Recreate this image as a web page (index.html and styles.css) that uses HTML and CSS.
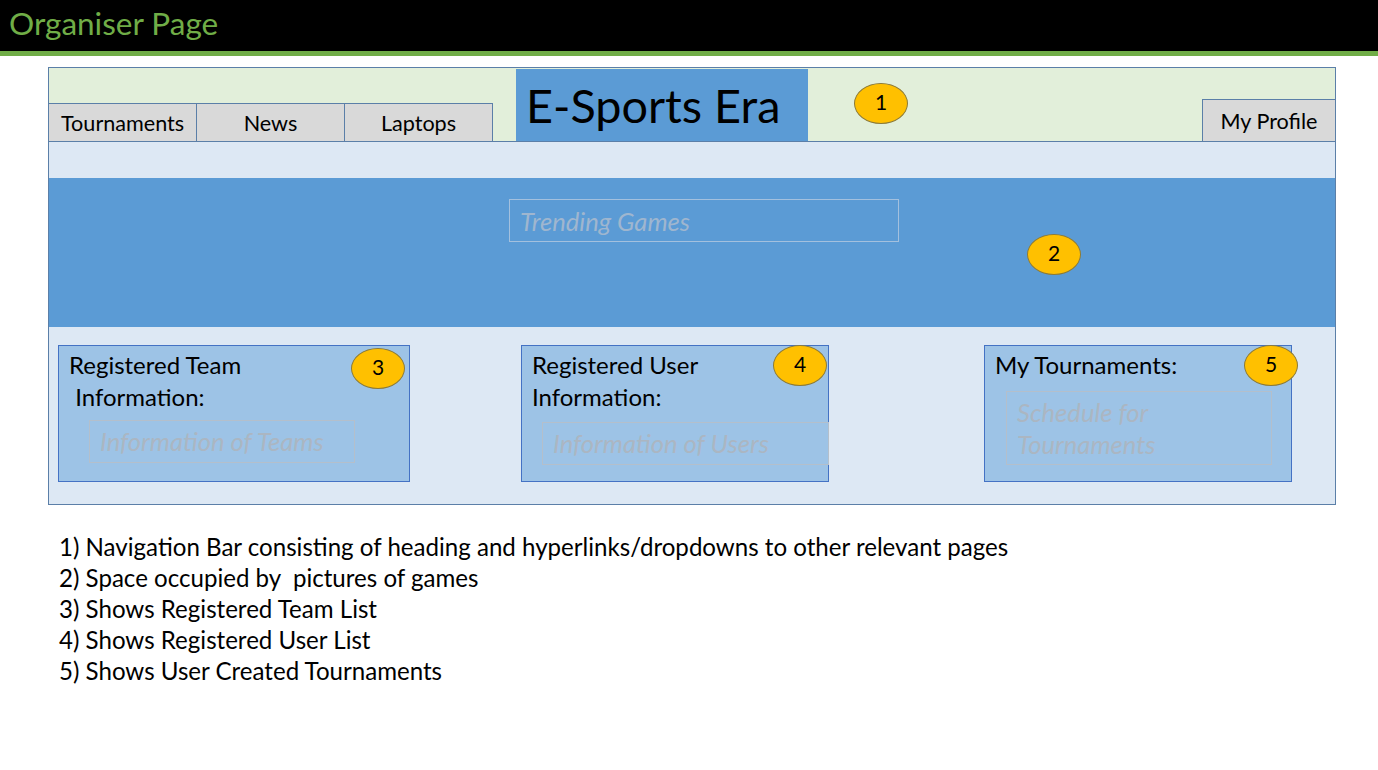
FILE: index.html
```html
<!DOCTYPE html>
<html>
<head>
<meta charset="utf-8">
<title>Organiser Page</title>
<link rel="stylesheet" href="styles.css">
</head>
<body>
<header class="topbar">
  <h1 class="page-title">Organiser Page</h1>
</header>

<section class="frame">
  <nav class="nav">
    <div class="tab tab-first">Tournaments</div>
    <div class="tab">News</div>
    <div class="tab">Laptops</div>
    <div class="brand">E-Sports Era</div>
    <div class="badge badge-nav">1</div>
    <div class="profile">My Profile</div>
  </nav>
  <div class="strip"></div>
  <div class="banner">
    <div class="trending">Trending Games</div>
    <div class="badge badge-banner">2</div>
  </div>
  <div class="cards">
    <div class="card card-team">
      <div class="card-title">Registered Team<br>&nbsp;Information:</div>
      <div class="inner inner-team">Information of Teams</div>
      <div class="badge badge-card badge-3">3</div>
    </div>
    <div class="card card-user">
      <div class="card-title">Registered User<br>Information:</div>
      <div class="inner inner-user">Information of Users</div>
      <div class="badge badge-card badge-4">4</div>
    </div>
    <div class="card card-tour">
      <div class="card-title">My Tournaments:</div>
      <div class="inner inner-tour">Schedule for<br>Tournaments</div>
      <div class="badge badge-card badge-5">5</div>
    </div>
  </div>
</section>

<ol class="notes">
  <li>1) Navigation Bar consisting of heading and hyperlinks/dropdowns to other relevant pages</li>
  <li>2) Space occupied by &nbsp;pictures of games</li>
  <li>3) Shows Registered Team List</li>
  <li>4) Shows Registered User List</li>
  <li>5) Shows User Created Tournaments</li>
</ol>
</body>
</html>
```

FILE: styles.css
```css
* { box-sizing: border-box; }

body {
  margin: 0;
  background: #ffffff;
  font-family: Lato, "Open Sans", "Liberation Sans", sans-serif;
  color: #000;
}

.topbar {
  height: 56px;
  background: #000;
  border-bottom: 5px solid #70ad47;
  display: flex;
  align-items: center;
  padding-left: 9px;
}

.page-title {
  margin: 0;
  font-weight: 400;
  font-size: 31.5px;
  color: #70ad47;
  line-height: 1;
  padding-bottom: 4px;
}

.frame {
  margin: 11px 0 0 48px;
  width: 1288px;
  border: 1px solid #5b7fa8;
  background: #dde8f4;
  display: flex;
  flex-direction: column;
}

.nav {
  height: 74px;
  background: #e2efda;
  border-bottom: 1px solid #5b7fa8;
  display: flex;
  align-items: flex-end;
}

.tab {
  width: 149px;
  height: 38px;
  margin-left: -1px;
  background: #d9d9d9;
  border: 1px solid #5b7fa8;
  border-bottom: none;
  display: flex;
  align-items: center;
  justify-content: center;
  font-size: 21.6px;
  padding-top: 1px;
}

.tab-first { justify-content: flex-start; padding-left: 12px; }

.brand {
  align-self: flex-start;
  margin-top: 1px;
  margin-left: 23px;
  width: 292px;
  height: 72px;
  background: #5b9bd5;
  font-size: 46.8px;
  line-height: 72px;
  padding-left: 10px;
}

.badge {
  width: 54px;
  height: 41px;
  border-radius: 50%;
  background: #ffc000;
  border: 1px solid #8a7a3a;
  display: flex;
  align-items: center;
  justify-content: center;
  font-size: 21px;
  line-height: 1;
  padding-bottom: 5px;
  flex: none;
}

.badge-nav {
  align-self: flex-start;
  margin-top: 15px;
  margin-left: 46px;
}

.profile {
  margin-left: auto;
  margin-right: -1px;
  width: 134px;
  height: 42px;
  background: #d9d9d9;
  border: 1px solid #5b7fa8;
  border-bottom: none;
  display: flex;
  align-items: center;
  justify-content: center;
  font-size: 21.6px;
}

.strip { height: 36px; }

.banner {
  height: 149px;
  background: #5b9bd5;
  display: flex;
  align-items: flex-start;
  padding: 21px 0 0 460px;
}

.trending {
  width: 390px;
  height: 43px;
  border: 1px solid #a3c0de;
  color: #9fb6cf;
  font-style: italic;
  font-size: 25.6px;
  display: flex;
  align-items: center;
  padding-left: 10px;
}

.badge-banner {
  margin-left: 128px;
  margin-top: 35px;
}

.cards {
  display: flex;
  align-items: flex-start;
  padding: 18px 0 22px 9px;
}

.card {
  position: relative;
  height: 137px;
  background: #9dc3e6;
  border: 1px solid #4472c4;
  padding: 3px 0 0 10px;
}

.card-team { width: 352px; }
.card-user { width: 308px; margin-left: 111px; }
.card-tour { width: 308px; margin-left: 155px; }

.card-title {
  font-size: 24px;
  line-height: 32px;
}

.inner {
  border: 1px solid #b4bfcb;
  color: #abb6c2;
  font-style: italic;
  font-size: 25.6px;
  padding-left: 10px;
  white-space: nowrap;
}

.inner-team {
  width: 266px;
  height: 43px;
  margin: 7px 0 0 20px;
  line-height: 40px;
}

.inner-user {
  width: 287px;
  height: 43px;
  margin: 9px 0 0 10px;
  line-height: 40px;
}

.inner-tour {
  width: 266px;
  height: 74px;
  margin: 10px 0 0 11px;
  line-height: 32px;
  padding-top: 4px;
}

.badge-card { position: absolute; }
.badge-3 { left: 292px; top: 2px; }
.badge-4 { left: 251px; top: -1px; }
.badge-5 { left: 259px; top: -1px; }

.notes {
  list-style: none;
  margin: 26px 0 0 59px;
  padding: 0;
  font-size: 24.1px;
  line-height: 31px;
}
```
